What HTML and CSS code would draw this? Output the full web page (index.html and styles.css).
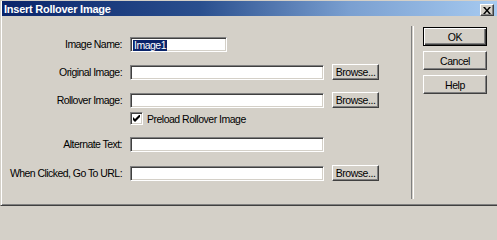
FILE: index.html
```html
<!DOCTYPE html>
<html>
<head>
<meta charset="utf-8">
<link rel="stylesheet" href="styles.css">
</head>
<body>
<div class="window">
  <div class="titlebar">
    <span class="title">Insert Rollover Image</span>
    <div class="close">
      <svg width="8" height="7" viewBox="0 0 8 7"><path d="M0 0h2l2 2.5L6 0h2L5 3.5 8 7H6L4 4.5 2 7H0l3-3.5z" fill="#000"/></svg>
    </div>
  </div>
  <div class="body">
    <div class="form">
      <div class="row r-name">
        <span class="label">Image Name:</span>
        <div class="field short"><span class="sel">Image1</span></div>
      </div>
      <div class="row r-orig">
        <span class="label">Original Image:</span>
        <div class="field"></div>
        <div class="btn browse">Browse...</div>
      </div>
      <div class="row r-roll">
        <span class="label">Rollover Image:</span>
        <div class="field"></div>
        <div class="btn browse">Browse...</div>
      </div>
      <div class="row r-check">
        <span class="label"></span>
        <label class="check">
          <span class="box"><svg width="7" height="7" viewBox="0 0 7 7"><path d="M0 2v3l2 2 5-5V-1L2 4z" fill="#000"/></svg></span>
          <span>Preload Rollover Image</span>
        </label>
      </div>
      <div class="row r-alt">
        <span class="label">Alternate Text:</span>
        <div class="field"></div>
      </div>
      <div class="row r-url">
        <span class="label">When Clicked, Go To URL:</span>
        <div class="field"></div>
        <div class="btn browse">Browse...</div>
      </div>
    </div>
    <div class="sep"></div>
    <div class="actions">
      <div class="btn default">OK</div>
      <div class="btn">Cancel</div>
      <div class="btn">Help</div>
    </div>
  </div>
</div>
</body>
</html>
```
FILE: styles.css
```css
html, body {
  margin: 0;
  padding: 0;
  background: #d4d0c8;
}
.window {
  width: 497px;
  height: 206px;
  box-sizing: border-box;
  background: #d4d0c8;
  border-left: 1px solid #d4d0c8;
  border-top: 1px solid #d4d0c8;
  border-bottom: 1px solid #404040;
  box-shadow: inset 1px 0 #fff, inset 0 -1px #808080;
  font-family: "Liberation Sans", Arial, sans-serif;
  font-size: 10.5px;
  color: #000;
  display: flex;
  flex-direction: column;
  overflow: hidden;
}
.titlebar {
  height: 15px;
  margin-left: 1px;
  background: linear-gradient(to right, #0a246a 0%, #2a4f8e 40%, #7a9fd0 70%, #a6caf0 100%);
  display: flex;
  align-items: center;
  justify-content: space-between;
  padding: 0 3px 0 2px;
  flex: none;
}
.title {
  color: #fff;
  font-weight: bold;
  font-size: 11px;
  letter-spacing: -0.25px;
}
.close {
  width: 12px;
  height: 10px;
  margin-top: 3px;
  background: #d4d0c8;
  border-top: 1px solid #fff;
  border-left: 1px solid #fff;
  border-right: 1px solid #404040;
  border-bottom: 1px solid #404040;
  box-shadow: inset -1px -1px #808080;
  display: flex;
  align-items: center;
  justify-content: center;
}
.body {
  flex: 1;
  display: flex;
  align-items: flex-start;
}
.form {
  display: flex;
  flex-direction: column;
  padding-top: 20px;
}
.row {
  display: flex;
  align-items: center;
  height: 16px;
  gap: 8px;
}
.r-orig, .r-roll { margin-top: 12px; }
.r-check { margin-top: 4px; height: 13px; }
.r-alt { margin-top: 11px; }
.r-url { margin-top: 13px; }
.label {
  width: 121px;
  text-align: right;
  letter-spacing: -0.55px;
  white-space: nowrap;
  flex: none;
}
.field {
  width: 194px;
  height: 15px;
  margin-top: 1px;
  box-sizing: border-box;
  background: #fff;
  border-top: 1px solid #808080;
  border-left: 1px solid #808080;
  border-right: 1px solid #fff;
  border-bottom: 1px solid #fff;
  box-shadow: inset 1px 1px #404040, inset -1px -1px #d4d0c8;
  padding: 1px 0 0 2px;
  display: flex;
  align-items: center;
  flex: none;
}
.field.short { width: 97px; }
.sel {
  background: #0a246a;
  color: #fff;
  line-height: 11px;
  padding: 0 1px;
  letter-spacing: -0.5px;
}
.btn {
  box-sizing: border-box;
  background: #d4d0c8;
  border-top: 1px solid #fff;
  border-left: 1px solid #fff;
  border-right: 1px solid #404040;
  border-bottom: 1px solid #404040;
  box-shadow: inset -1px -1px #808080;
  display: flex;
  align-items: center;
  justify-content: center;
  letter-spacing: -0.45px;
  white-space: nowrap;
}
.browse {
  width: 47px;
  height: 16px;
  flex: none;
}
.check {
  display: flex;
  align-items: center;
  gap: 4px;
  letter-spacing: -0.5px;
}
.box {
  width: 13px;
  height: 13px;
  box-sizing: border-box;
  background: #fff;
  border-top: 1px solid #808080;
  border-left: 1px solid #808080;
  border-right: 1px solid #fff;
  border-bottom: 1px solid #fff;
  box-shadow: inset 1px 1px #404040, inset -1px -1px #d4d0c8;
  display: flex;
  align-items: center;
  justify-content: center;
  flex: none;
}
.sep {
  width: 1px;
  height: 173px;
  margin: 10px 0 0 32px;
  border-left: 1px solid #808080;
  border-right: 1px solid #fff;
  flex: none;
}
.actions {
  margin: 11px 0 0 9px;
  display: flex;
  flex-direction: column;
  gap: 5px;
}
.actions .btn {
  width: 64px;
  height: 19px;
}
.actions .default {
  border: 1px solid #000;
  box-shadow: inset 1px 1px #fff, inset -1px -1px #404040, inset -2px -2px #808080;
}
```
